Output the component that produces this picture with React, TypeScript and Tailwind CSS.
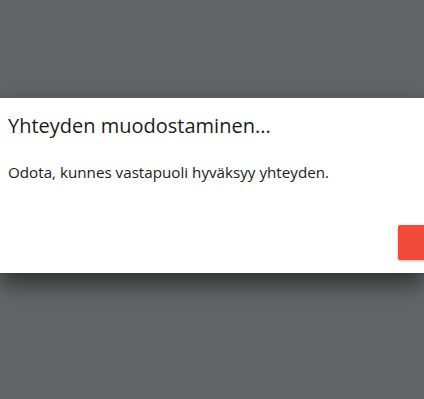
export default function App() {
  return (
    <div className="h-[399px] w-[424px] overflow-hidden bg-[#636466] pt-[98px] font-['Open_Sans',sans-serif]">
      <div className="flex h-[175px] w-full flex-col bg-white shadow-[0_10px_22px_rgba(0,0,0,0.55)]">
        <h1 className="pl-2 pt-[14px] text-[20px] leading-[28px] text-[#1b1b1b]">
          Yhteyden muodostaminen...
        </h1>
        <p className="pl-2 pt-[22px] text-[15.2px] leading-[20px] text-[#1b1b1b]">
          Odota, kunnes vastapuoli hyväksyy yhteyden.
        </p>
        <div className="flex justify-end pt-[43px]">
          <button className="mr-[-40px] h-[35px] w-[66px] rounded-[2px] bg-[#ef4a3a] shadow-[0_1px_3px_rgba(0,0,0,0.3)]" />
        </div>
      </div>
    </div>
  )
}
